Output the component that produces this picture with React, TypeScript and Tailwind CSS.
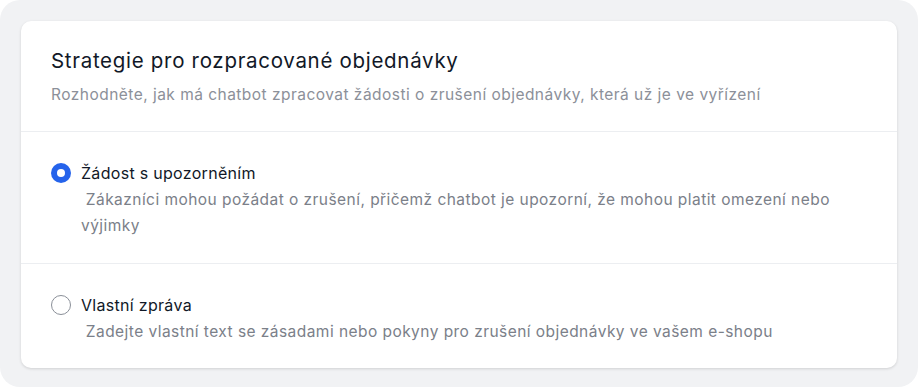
import { useState } from "react";

const OPTIONS = [
  {
    id: "notice",
    title: "Žádost s upozorněním",
    text: "\u00a0Zákazníci mohou požádat o zrušení, přičemž chatbot je upozorní, že mohou platit omezení nebo výjimky",
  },
  {
    id: "custom",
    title: "Vlastní zpráva",
    text: "\u00a0Zadejte vlastní text se zásadami nebo pokyny pro zrušení objednávky ve vašem e-shopu",
  },
];

export default function App() {
  const [selected, setSelected] = useState("notice");

  return (
    <div className="w-[918px] h-[387px] bg-white font-['Inter',sans-serif]">
      <div className="h-full rounded-[20px] bg-[#f1f2f4] p-[21px] pb-[19px]">
        <div className="h-full rounded-[10px] bg-white shadow-[0_1px_3px_rgba(0,0,0,0.14)]">
          {/* hlavička */}
          <div className="px-[30px] pt-[26px] pb-[24px] border-b border-[#eceef1]">
            <h2 className="text-[20.5px] leading-[28px] tracking-[0.7px] text-[#111827]">
              Strategie pro rozpracované objednávky
            </h2>
            <p className="mt-[8px] text-[15.5px] leading-[24px] tracking-[0.47px] text-[#8c9099]">
              Rozhodněte, jak má chatbot zpracovat žádosti o zrušení objednávky, která už je ve vyřízení
            </p>
          </div>

          {OPTIONS.map((o, i) => {
            const checked = selected === o.id;
            return (
              <div
                key={o.id}
                onClick={() => setSelected(o.id)}
                className={`flex gap-[10px] px-[30px] pt-[30px] cursor-pointer ${i === 0 ? "pb-[24px] border-b border-[#eceef1]" : "pb-[16px]"}`}
              >
                <div className="pt-[1px]">
                  {checked ? (
                    <div className="w-[20px] h-[20px] rounded-full bg-[#2563eb] flex items-center justify-center">
                      <div className="w-[8px] h-[8px] rounded-full bg-white" />
                    </div>
                  ) : (
                    <div className="w-[20px] h-[20px] rounded-full border-[1.5px] border-[#8a8f98] bg-white" />
                  )}
                </div>
                <div className="flex-1">
                  <div className="text-[16px] leading-[22px] tracking-[0.3px] text-[#111827]">{o.title}</div>
                  <p className="mt-[3px] text-[15.5px] leading-[26px] tracking-[0.45px] text-[#7b8089]">
                    {o.text}
                  </p>
                </div>
              </div>
            );
          })}
        </div>
      </div>
    </div>
  );
}
